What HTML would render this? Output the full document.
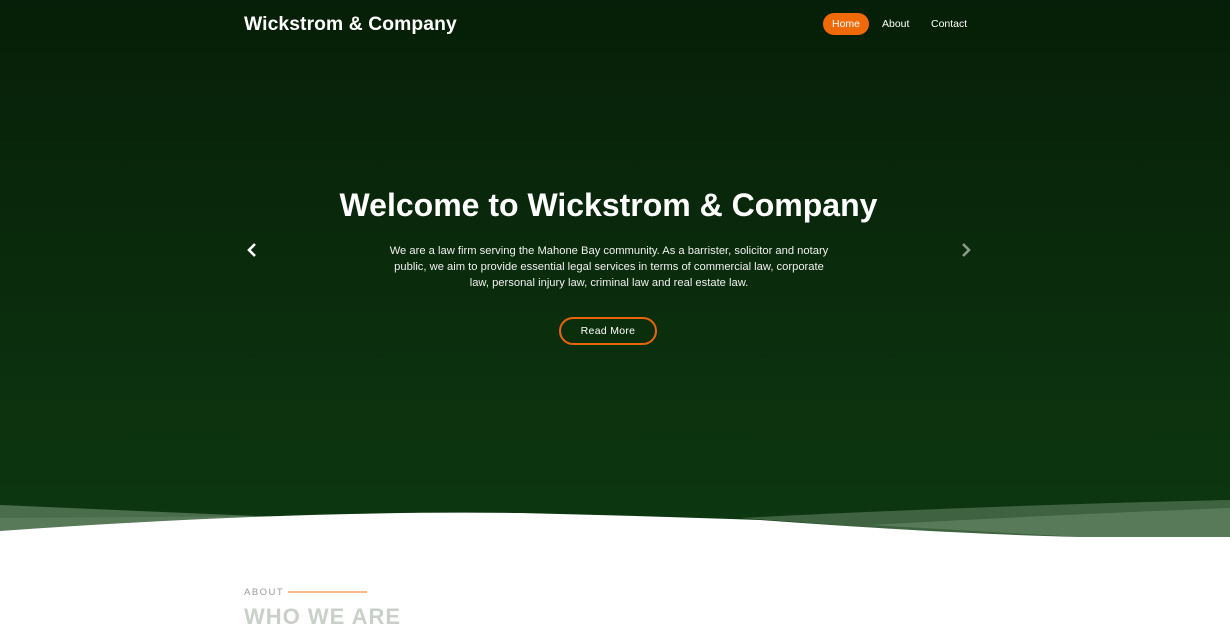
<!DOCTYPE html>
<html><head><style>
*{margin:0;padding:0;box-sizing:border-box}
body{width:1230px;height:609px;overflow:hidden;background:#fff;font-family:"Liberation Sans",sans-serif;position:relative}
.hero{position:absolute;left:0;top:0;width:1230px;height:540px;background:linear-gradient(180deg,#061f08 0%,#0a2a0c 45%,#0d3810 100%)}
.logo{position:absolute;left:244px;top:14px;color:#fff;font-size:19.3px;font-weight:bold;letter-spacing:0.1px}
.nav{position:absolute;top:13px;height:22px;font-size:10.5px;color:#fff;line-height:22px}
.home{left:823px;width:46px;background:#f06a0a;border-radius:11px;text-align:center}
h1{position:absolute;left:0;width:1217px;top:187px;text-align:center;color:#fff;font-size:32px;font-weight:bold}
.p{position:absolute;left:386px;width:446px;top:243px;text-align:center;color:#f0f0f0;font-size:11.2px;line-height:16px}
.btn{position:absolute;left:559px;top:317px;width:98px;height:28px;border:2px solid #e8650c;border-radius:14px;color:#fff;font-size:10.5px;text-align:center;line-height:24px;letter-spacing:0.3px}
</style></head><body>
<div class="hero"></div>
<svg style="position:absolute;left:0;top:490px" width="1230" height="60" viewBox="0 490 1230 60">
<path d="M0 505 L0 532 L280 517 Z" fill="#4a6d4c"/>
<path d="M0 518 L0 532 L300 516 Z" fill="#587a59"/>
<path d="M740 518 Q1000 505 1230 500 L1230 537 L1000 537 Z" fill="#3f6341"/>
<path d="M870 525 Q1050 515 1230 508 L1230 537 L1080 537 Z" fill="#587a59"/>
<path d="M0 531 Q300 510 520 513 Q650 516 760 520 Q950 534 1080 537 L1230 537 L1230 550 L0 550 Z" fill="#fff"/>
</svg>
<div class="logo">Wickstrom &amp; Company</div>
<div class="nav home">Home</div>
<div class="nav" style="left:882px">About</div>
<div class="nav" style="left:931px">Contact</div>
<h1>Welcome to Wickstrom &amp; Company</h1>
<div class="p">We are a law firm serving the Mahone Bay community. As a barrister, solicitor and notary public, we aim to provide essential legal services in terms of commercial law, corporate law, personal injury law, criminal law and real estate law.</div>
<div class="btn">Read More</div>
<svg style="position:absolute;left:246px;top:242px" width="12" height="16"><path d="M9 2 L3 8 L9 14" stroke="#fff" stroke-width="2.6" fill="none"/></svg>
<svg style="position:absolute;left:960px;top:242px" width="12" height="16"><path d="M3 2 L9 8 L3 14" stroke="#8a9a8a" stroke-width="2.6" fill="none"/></svg>
<div style="position:absolute;left:244px;top:587px;font-size:9.5px;letter-spacing:1.5px;color:#999">ABOUT</div>
<div style="position:absolute;left:288px;top:591px;width:79px;height:2px;background:#f8b98a"></div>
<div style="position:absolute;left:244px;top:604px;font-size:22px;font-weight:bold;color:#c8d0c8;letter-spacing:1px">WHO WE ARE</div>
</body></html>
